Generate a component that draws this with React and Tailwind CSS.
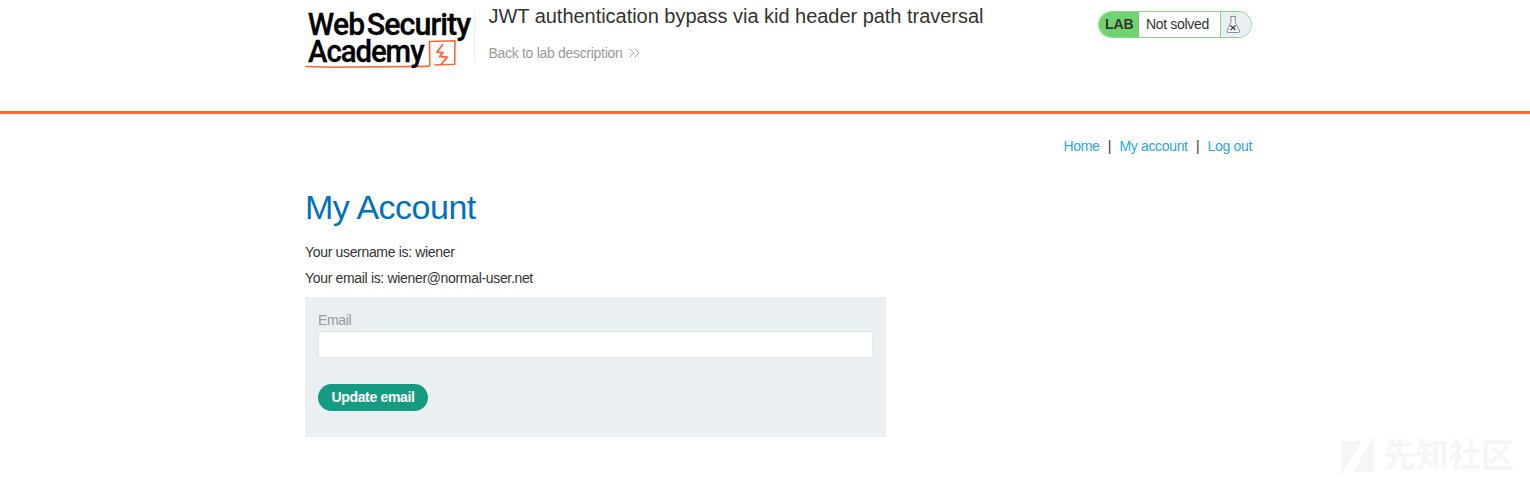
function Logo() {
  return (
    <svg className="block h-[70px] w-[170px] shrink-0" viewBox="0 0 170 70" aria-label="Web Security Academy">
      <path d="M1 66.500L25 67.200L122 66.400L124.800 65.500L124.500 41.500L150 40.700L149.700 64.200L130 65" fill="none" stroke="#ff6633" strokeWidth="1.6" strokeLinejoin="round" strokeLinecap="round" />
      <path d="M137.500 44.700L132 52L138 52.800L134.500 56.500L142.500 57.200L136 64.500" fill="none" stroke="#ff6633" strokeWidth="1.8" strokeLinejoin="round" strokeLinecap="round" />
      <g fontFamily="Roboto, sans-serif" fontWeight="500" fontSize="31" fill="#000" stroke="#000" strokeWidth="0.3">
        <text transform="translate(2.700 35) scale(0.970 1)" letterSpacing="-0.800">Web</text>
        <text transform="translate(61.800 35) scale(0.982 1)" letterSpacing="-1">Security</text>
        <text transform="translate(3 62) scale(0.947 1)" letterSpacing="-1.100">Academy</text>
      </g>
    </svg>
  );
}

function Flask() {
  return (
    <svg className="h-[19px] w-[15px]" viewBox="0 0 15 19" fill="none" stroke="#808285" strokeWidth="0.9">
      <path d="M4 1.500H10M5 1.500V7L1 16Q.7 17.500 2 17.500H12.500Q14 17.500 13.500 16L9.200 7V1.500" fill="#f7f7f7" />
      <path d="M4.500 10.500L9.500 15M9.500 10.500L4.500 15" stroke="#333" strokeWidth="1.1" />
    </svg>
  );
}

function Watermark() {
  return (
    <div className="absolute left-[1340px] top-[435px] flex text-[#f6f6f6]">
      <svg className="h-[42px] w-[36px]" viewBox="0 0 36 42" fill="currentColor">
        <path d="M1 6H22L1 40ZM34 1V37H13Z" />
      </svg>
      <span className="ml-[7px] mt-[-3px] whitespace-nowrap font-['Noto_Sans_CJK_SC',sans-serif] text-[33px] font-bold leading-[42px]">先知社区</span>
    </div>
  );
}

export default function App() {
  return (
    <div className="relative h-[479px] overflow-hidden bg-white font-['Liberation_Sans',Arial,sans-serif] text-[14px] leading-[20px] tracking-[-0.33px] text-[#333332]">
      <header className="h-[114px] border-b-[3px] border-[#ff6633]">
        <div className="ml-[305px] flex w-[947px] items-start">
          <Logo />
          <div className="ml-[-1px] mt-[11px] h-[52px] w-px bg-[#eeeeee]" />
          <div className="ml-[13.5px] grow">
            <h2 className="mt-[4px] whitespace-nowrap text-[20px] leading-[24px] tracking-[-0.03px]">JWT authentication bypass via kid header path traversal</h2>
            <a className="mt-[15px] flex items-center tracking-[-0.3px] text-[#999999]">
              Back to lab description
              <svg className="ml-[7px] h-[10px] w-[11px]" viewBox="0 0 11 10" fill="none" stroke="#aaaaaa" strokeWidth="1">
                <path d="M.5 .5L5 5L.5 9.500M5.500 .5L10 5L5.500 9.500" />
              </svg>
            </a>
          </div>
          <div className="mt-[11px] flex h-[27px] w-[154px] shrink-0 overflow-hidden rounded-full border border-[#82d789] leading-[25px]">
            <strong className="w-[40px] bg-[#6fd46f] pl-[6px] text-[14px] tracking-[-0.1px]">LAB</strong>
            <span className="w-[82px] border-r border-[#82d789] pl-[7px]">Not solved</span>
            <span className="flex grow items-center bg-[#eaeff2] pl-[5px]"><Flask /></span>
          </div>
        </div>
      </header>
      <main className="ml-[305px] w-[947px]">
        <nav className="flex justify-end gap-[8.3px] pt-[22px] text-[#29a7df]">
          <a>Home</a>
          <span className="text-[#333332]">|</span>
          <a>My account</a>
          <span className="text-[#333332]">|</span>
          <a>Log out</a>
        </nav>
        <h1 className="mt-[31px] text-[34px] leading-[40px] tracking-[-0.5px] text-[#0071ba]">My Account</h1>
        <p className="mt-[15px]">Your username is: wiener</p>
        <p className="mt-[6px]">Your email is: wiener@normal-user.net</p>
        <form className="mt-[9px] h-[140px] w-[581px] bg-[#eaeff2] px-[13px] pt-[13px]">
          <label className="block h-[21px] text-[#999999]" htmlFor="email">Email</label>
          <input id="email" className="block h-[27px] w-[555px] border border-[#e3e8eb] bg-white px-2 outline-none" />
          <button type="button" className="mt-[26px] block h-[27px] w-[110px] rounded-full bg-[#159c80] pb-[2px] text-center font-bold text-white">Update email</button>
        </form>
      </main>
      <Watermark />
    </div>
  );
}
